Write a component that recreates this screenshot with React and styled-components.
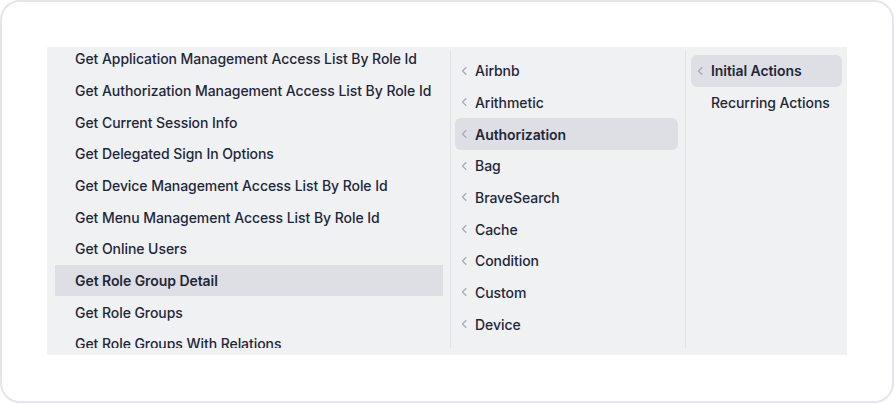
import styled, { createGlobalStyle } from "styled-components";

const GlobalStyle = createGlobalStyle`
  * { box-sizing: border-box; }
  body {
    margin: 0;
    background: #fff;
    font-family: Inter, "Noto Sans", sans-serif;
    -webkit-font-smoothing: antialiased;
  }
`;

const Card = styled.div`
  width: 894px;
  height: 403px;
  border: 2px solid #e4e6ea;
  border-radius: 20px;
  background: #fff;
  padding: 45px 45px 0 45px;
`;

const Panel = styled.div`
  width: 800px;
  height: 308px;
  background: #f0f1f3;
  padding: 4px 0 7px;
  display: flex;
`;

const Column = styled.div`
  width: ${(p) => p.$width}px;
  height: 100%;
  border-right: ${(p) => (p.$last ? "none" : "1px solid #dfe1e5")};
  overflow: hidden;
  padding: ${(p) => p.$pad};
`;

const List = styled.div`
  display: flex;
  flex-direction: column;
  margin-top: ${(p) => p.$offset || 0}px;
`;

const Row = styled.div`
  height: 31.67px;
  flex-shrink: 0;
  display: flex;
  align-items: center;
  padding-left: ${(p) => p.$indent}px;
  border-radius: ${(p) => p.$radius}px;
  background: ${(p) => (p.$active ? "#dedfe4" : "transparent")};
  color: #1e2739;
  font-size: 14px;
  letter-spacing: -0.06px;
  font-weight: ${(p) => (p.$active ? 600 : p.$weight)};
  white-space: nowrap;
  gap: 5px;
`;

const Chevron = ({ hidden }) => (
  <svg width="12" height="12" viewBox="0 0 12 12" style={{ visibility: hidden ? "hidden" : "visible", flexShrink: 0 }}>
    <path d="M8 2.5 L4.5 6 L8 9.5" fill="none" stroke="#a3a8b1" strokeWidth="1.1" strokeLinecap="round" strokeLinejoin="round" />
  </svg>
);

const methods = [
  "Get Application Management Access List By Role Id",
  "Get Authorization Management Access List By Role Id",
  "Get Current Session Info",
  "Get Delegated Sign In Options",
  "Get Device Management Access List By Role Id",
  "Get Menu Management Access List By Role Id",
  "Get Online Users",
  "Get Role Group Detail",
  "Get Role Groups",
  "Get Role Groups With Relations",
];

const groups = ["Airbnb", "Arithmetic", "Authorization", "Bag", "BraveSearch", "Cache", "Condition", "Custom", "Device"];

const kinds = [
  { name: "Initial Actions", chevron: true },
  { name: "Recurring Actions", chevron: false },
];

export default function App() {
  return (
    <>
      <GlobalStyle />
      <Card>
        <Panel>
          <Column $width={404} $pad="0 7px 0 8px">
            <List $offset={-8}>
              {methods.map((m) => (
                <Row key={m} $indent={20} $radius={0} $weight={500} $active={m === "Get Role Group Detail"}>
                  {m}
                </Row>
              ))}
            </List>
          </Column>
          <Column $width={235} $pad="4px 7px 0 4px">
            <List>
              {groups.map((g) => (
                <Row key={g} $indent={3} $radius={6} $weight={500} $active={g === "Authorization"}>
                  <Chevron />
                  {g}
                </Row>
              ))}
            </List>
          </Column>
          <Column $width={161} $pad="4px 5px 0 5px" $last>
            <List>
              {kinds.map((k) => (
                <Row key={k.name} $indent={3} $radius={6} $weight={500} $active={k.name === "Initial Actions"}>
                  <Chevron hidden={!k.chevron} />
                  {k.name}
                </Row>
              ))}
            </List>
          </Column>
        </Panel>
      </Card>
    </>
  );
}
